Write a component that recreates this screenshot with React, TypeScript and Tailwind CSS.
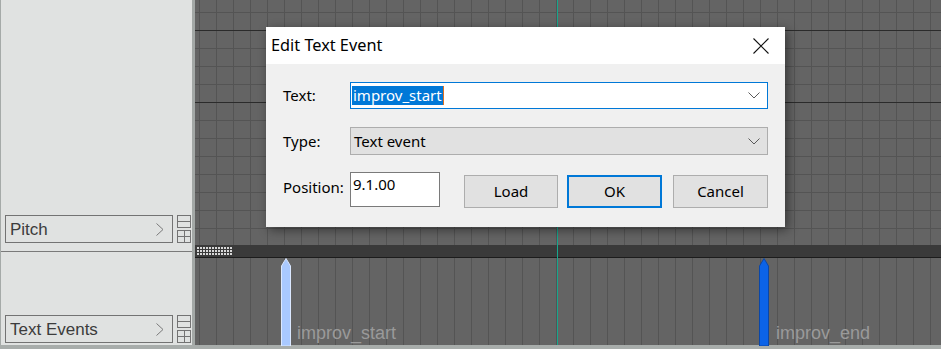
import React from 'react'

const gridTop =
  'bg-[#646464] bg-[image:linear-gradient(to_bottom,transparent_30px,#2b2b2b_30px,#2b2b2b_31px,transparent_31px,transparent_102px,#2b2b2b_102px,#2b2b2b_103px,transparent_103px),repeating-linear-gradient(to_right,transparent_0px,transparent_4px,#545454_4px,#545454_5px,transparent_5px,transparent_17px),repeating-linear-gradient(to_bottom,transparent_0px,transparent_12px,#545454_12px,#545454_13px,transparent_13px,transparent_18px)]'

const gridBottom =
  'bg-[#646464] bg-[image:repeating-linear-gradient(to_right,transparent_0px,transparent_4px,#545454_4px,#545454_5px,transparent_5px,transparent_17px)]'

function Chevron({ className }: { className?: string }) {
  return (
    <svg width="12" height="7" viewBox="0 0 12 7" className={className}>
      <polyline points="0.5,0.5 6,6 11.5,0.5" fill="none" stroke="#5a5a5a" strokeWidth="1" />
    </svg>
  )
}

function LaneSelector({ label }: { label: string }) {
  return (
    <div className="flex items-start ml-[4px] gap-[4px]">
      <div className="w-[168px] h-[28px] border border-[#737373] flex items-center justify-between pl-[4px] pr-[8px]">
        <span className="text-[17px] text-[#3c3c3c] font-['Liberation_Sans',Arial,sans-serif] leading-none">{label}</span>
        <svg width="8" height="13" viewBox="0 0 8 13">
          <polyline points="0.5,0.5 7,6.5 0.5,12.5" fill="none" stroke="#7a7a7a" strokeWidth="1" />
        </svg>
      </div>
      <div className="flex flex-col gap-[2px]">
        <div className="w-[14px] h-[13px] border border-[#737373] flex items-center justify-center">
          <div className="w-[12px] h-px bg-[#737373]" />
        </div>
        <div className="w-[14px] h-[13px] border border-[#737373] relative flex items-center justify-center">
          <div className="w-[12px] h-px bg-[#737373]" />
          <div className="absolute w-px h-[11px] bg-[#737373]" />
        </div>
      </div>
    </div>
  )
}

function Marker({ fill, stroke }: { fill: string; stroke: string }) {
  return (
    <svg width="10" height="88" viewBox="0 0 10 88">
      <polygon points="5,0.5 9.5,8 9.5,88 0.5,88 0.5,8" fill={fill} stroke={stroke} strokeWidth="1" />
    </svg>
  )
}

function EditTextEventDialog() {
  return (
    <div className="absolute z-20 left-[266px] top-[27px] w-[519px] h-[200px] flex flex-col shadow-[3px_3px_10px_rgba(0,0,0,0.45)] font-['Noto_Sans',sans-serif] text-[15px] text-black">
      {/* Title bar */}
      <div className="h-[37px] bg-white flex items-center justify-between pl-[5px] pr-[16px]">
        <span className="text-[16.3px] leading-none">Edit Text Event</span>
        <svg width="16" height="16" viewBox="0 0 16 16">
          <path d="M0.5 0.5 L15.5 15.5 M15.5 0.5 L0.5 15.5" stroke="#111" strokeWidth="1.1" fill="none" />
        </svg>
      </div>

      {/* Body */}
      <div className="flex-1 bg-[#f0f0f0] pl-[17px] pt-[18px] flex flex-col">
        <div className="flex items-center h-[27px]">
          <span className="w-[67px] leading-none">Text:</span>
          <div className="w-[418px] h-[27px] bg-white border border-[#0078d7] flex items-center justify-between pl-[1px] pr-[7px]">
            <span className="bg-[#0078d7] text-white leading-[19px] h-[19px] px-[1px] border-r border-[#e07020]">improv_start</span>
            <Chevron />
          </div>
        </div>

        <div className="flex items-center h-[28px] mt-[18px]">
          <span className="w-[67px] leading-none">Type:</span>
          <div className="w-[418px] h-[28px] bg-[#e1e1e1] border border-[#adadad] flex items-center justify-between pl-[3px] pr-[7px]">
            <span className="leading-none">Text event</span>
            <Chevron />
          </div>
        </div>

        <div className="flex items-start mt-[17px]">
          <span className="w-[67px] leading-none mt-[8px]">Position:</span>
          <div className="w-[90px] h-[35px] bg-white border border-[#7a7a7a] pl-[2px] pt-[2px] leading-[18px]">9.1.00</div>
          <div className="flex items-start mt-[3px] ml-[24px]">
            <button className="w-[94px] h-[33px] bg-[#e1e1e1] border border-[#adadad] leading-none">Load</button>
            <button className="w-[95px] h-[33px] ml-[9px] bg-[#e1e1e1] border-2 border-[#0078d7] leading-none">OK</button>
            <button className="w-[95px] h-[33px] ml-[11px] bg-[#e1e1e1] border border-[#adadad] leading-none">Cancel</button>
          </div>
        </div>
      </div>
    </div>
  )
}

export default function App() {
  return (
    <div className="w-[941px] h-[349px] overflow-hidden flex flex-col bg-[#a8adab]">
      <div className="h-[345px] flex relative">
        {/* Lane list */}
        <div className="w-[195px] h-full bg-[#e0e2e1] border-l border-[#a5aaa8] border-r-[3px] border-r-[#a3a8a6] flex flex-col">
          <div className="h-[252px] border-b border-[#7a7a7a] flex flex-col justify-end pb-[8px]">
            <LaneSelector label="Pitch" />
          </div>
          <div className="flex-1 flex flex-col justify-end pb-[2px]">
            <LaneSelector label="Text Events" />
          </div>
        </div>

        {/* Editor area */}
        <div className="flex-1 flex flex-col relative">
          <div className={`h-[245px] ${gridTop}`} />
          <div className="h-[13px] bg-[#3a3a3a] border-b border-[#1c1c1c] flex items-center pl-[2px]">
            <svg width="36" height="9" viewBox="0 0 36 9">
              {Array.from({ length: 36 }).map((_, i) => (
                <rect key={i} x={(i % 12) * 3} y={Math.floor(i / 12) * 3} width="2" height="2" fill="#d8d8d8" />
              ))}
            </svg>
          </div>
          <div className={`flex-1 relative ${gridBottom} font-['Liberation_Sans',Arial,sans-serif] text-[18px] text-[#9a9a9a]`}>
            <div className="absolute left-[86px] top-0">
              <Marker fill="#a9c9ff" stroke="#dbe8ff" />
            </div>
            <span className="absolute left-[102px] top-[66px] leading-[18px]">improv_start</span>
            <div className="absolute left-[564px] top-0">
              <Marker fill="#0b63e8" stroke="#0a47a8" />
            </div>
            <span className="absolute left-[581px] top-[66px] leading-[18px]">improv_end</span>
          </div>

          {/* play cursor */}
          <div className="absolute z-10 left-[362px] top-0 h-[345px] w-px bg-[#17a68d]" />
        </div>

        <EditTextEventDialog />
      </div>
    </div>
  )
}
